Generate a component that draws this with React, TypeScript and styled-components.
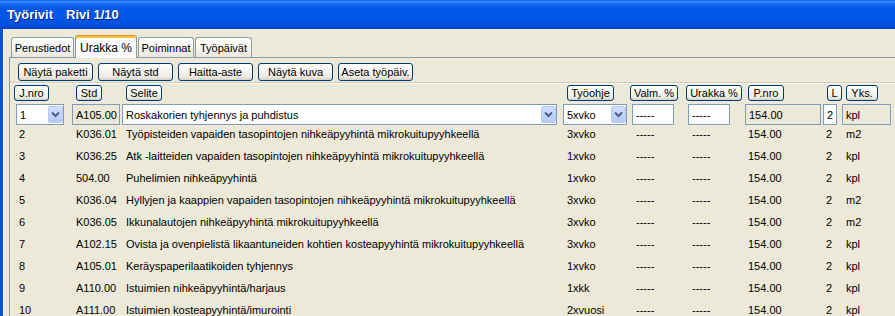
import styled, { createGlobalStyle } from "styled-components";

const GlobalStyle = createGlobalStyle`
  html, body {
    margin: 0;
    padding: 0;
    background: #ece9d8;
  }
  body {
    font-family: "Liberation Sans", Arial, sans-serif;
    font-size: 11px;
    color: #000;
  }
`;

const COLS = "56px 50px 441px 69px 56px 57px 78px 19px 60px";

const Window = styled.div`
  width: 895px;
  height: 316px;
  overflow: hidden;
  display: flex;
  flex-direction: column;
`;

const TitleBar = styled.div`
  height: 29px;
  flex: none;
  display: flex;
  align-items: center;
  gap: 13px;
  padding: 0 0 1px 7px;
  box-sizing: border-box;
  color: #fff;
  font-size: 13px;
  font-weight: bold;
  text-shadow: 1px 1px 0 #0a1e8a;
  background: linear-gradient(
    to bottom,
    #0a5cec 0%,
    #3a8dff 5%,
    #1a6ff5 12%,
    #0058e8 30%,
    #0055e5 70%,
    #0050dd 88%,
    #003fc2 100%
  );
`;

const Body = styled.div`
  flex: 1;
  border-left: 3px solid #0b4fdc;
  box-shadow: inset 1px 0 0 #f7f6f0;
  padding: 6px 0 0 6px;
  display: flex;
  flex-direction: column;
`;

const TabStrip = styled.div`
  display: flex;
  align-items: flex-end;
  height: 22px;
  padding-left: 2px;
  gap: 1px;
  position: relative;
  z-index: 1;
`;

const Tab = styled.div<{ $active?: boolean; $w: number }>`
  width: ${(p) => p.$w}px;
  height: ${(p) => (p.$active ? 23 : 20)}px;
  margin-bottom: ${(p) => (p.$active ? -1 : 0)}px;
  box-sizing: border-box;
  border: 1px solid #919b9c;
  border-bottom: none;
  border-radius: 3px 3px 0 0;
  display: flex;
  align-items: center;
  justify-content: center;
  padding-top: 1px;
  background: ${(p) =>
    p.$active ? "#fcfcfe" : "linear-gradient(to bottom, #fff 0%, #f3f2ec 60%, #e9e7df 100%)"};
  box-shadow: ${(p) => (p.$active ? "inset 0 2px 0 #ffc83c" : "none")};
  border-top-color: ${(p) => (p.$active ? "#e68b2c" : "#919b9c")};
  font-size: ${(p) => (p.$active ? 12 : 11)}px;
`;

const Panel = styled.div`
  flex: 1;
  border-top: 1px solid #919b9c;
  border-left: 1px solid #919b9c;
  padding-top: 5px;
`;

const Toolbar = styled.div`
  display: flex;
  gap: 5px;
  padding-left: 8px;
`;

const XpButton = styled.div<{ $w: number; $h: number }>`
  width: ${(p) => p.$w}px;
  height: ${(p) => p.$h}px;
  box-sizing: border-box;
  border: 1px solid #003c74;
  border-radius: 3px;
  background: linear-gradient(to bottom, #fff 0%, #f6f5f0 45%, #ecebe4 80%, #d6d0c5 100%);
  display: flex;
  align-items: center;
  justify-content: center;
  white-space: nowrap;
  flex: none;
`;

const Separator = styled.div`
  margin-top: 1px;
  height: 0;
  border-top: 1px solid #d0ccbc;
  border-bottom: 1px solid #f8f7f2;
`;

const Grid = styled.div`
  padding-left: 6px;
  margin-top: 1px;
`;

const HeaderRow = styled.div`
  display: grid;
  grid-template-columns: ${COLS};
  height: 16px;
  margin-bottom: 3px;
`;

const HeaderCell = styled.div<{ $shift: number }>`
  margin-left: ${(p) => p.$shift}px;
`;

const EditRow = styled.div`
  display: grid;
  grid-template-columns: ${COLS};
  height: 22px;
`;

const Field = styled.div<{ $w: number; $ro?: boolean }>`
  width: ${(p) => p.$w}px;
  height: 21px;
  box-sizing: border-box;
  border: 1px solid #7f9db9;
  background: ${(p) => (p.$ro ? "#ece9d8" : "#fff")};
  display: flex;
  align-items: center;
  font-size: 11px;
  white-space: nowrap;
  overflow: hidden;
`;

const FieldText = styled.span`
  flex: 1;
  padding-left: 3px;
`;

const DropButton = styled.div`
  width: 15px;
  height: 17px;
  margin: 1px 0;
  box-sizing: border-box;
  border-radius: 2px;
  background: linear-gradient(to bottom, #d2defc 0%, #c1d3fb 50%, #b4c8f6 100%);
  border: 1px solid #b9cbf3;
  display: flex;
  align-items: center;
  justify-content: center;
  flex: none;
`;

const DataRow = styled.div`
  display: grid;
  grid-template-columns: ${COLS};
  line-height: 16px;
  padding-bottom: 6px;
`;

const Cell = styled.div<{ $pad?: number }>`
  padding-left: ${(p) => p.$pad ?? 4}px;
  white-space: nowrap;
`;

const Chevron = () => (
  <svg width="9" height="7" viewBox="0 0 9 7">
    <path d="M1 1.5 L4.5 5 L8 1.5" fill="none" stroke="#4d6185" strokeWidth="2" />
  </svg>
);

const Combo = ({ w, value }: { w: number; value: string }) => (
  <Field $w={w}>
    <FieldText>{value}</FieldText>
    <DropButton>
      <Chevron />
    </DropButton>
  </Field>
);

const headers: { label: string; w: number; shift: number }[] = [
  { label: "J.nro", w: 35, shift: -2 },
  { label: "Std", w: 26, shift: 4 },
  { label: "Selite", w: 36, shift: 4 },
  { label: "Työohje", w: 47, shift: 4 },
  { label: "Valm. %", w: 48, shift: -2 },
  { label: "Urakka %", w: 56, shift: -2 },
  { label: "P.nro", w: 36, shift: 3 },
  { label: "L", w: 15, shift: 4 },
  { label: "Yks.", w: 32, shift: 4 },
];

const rows = [
  ["2", "K036.01", "Työpisteiden vapaiden tasopintojen nihkeäpyyhintä mikrokuitupyyhkeellä", "3xvko", "m2"],
  ["3", "K036.25", "Atk -laitteiden vapaiden tasopintojen nihkeäpyyhintä mikrokuitupyyhkeellä", "1xvko", "kpl"],
  ["4", "504.00", "Puhelimien nihkeäpyyhintä", "1xvko", "kpl"],
  ["5", "K036.04", "Hyllyjen ja kaappien vapaiden tasopintojen nihkeäpyyhintä mikrokuitupyyhkeellä", "3xvko", "m2"],
  ["6", "K036.05", "Ikkunalautojen nihkeäpyyhintä mikrokuitupyyhkeellä", "3xvko", "m2"],
  ["7", "A102.15", "Ovista ja ovenpielistä likaantuneiden kohtien kosteapyyhintä mikrokuitupyyhkeellä", "3xvko", "kpl"],
  ["8", "A105.01", "Keräyspaperilaatikoiden tyhjennys", "1xvko", "kpl"],
  ["9", "A110.00", "Istuimien nihkeäpyyhintä/harjaus", "1xkk", "kpl"],
  ["10", "A111.00", "Istuimien kosteapyyhintä/imurointi", "2xvuosi", "kpl"],
];

const tabs = [
  { label: "Perustiedot", w: 63 },
  { label: "Urakka %", w: 62, active: true },
  { label: "Poiminnat", w: 56 },
  { label: "Työpäivät", w: 57 },
];

const toolButtons = ["Näytä paketti", "Näytä std", "Haitta-aste", "Näytä kuva", "Aseta työpäiv."];

export default function App() {
  return (
    <>
      <GlobalStyle />
      <Window>
        <TitleBar>
          <span>Työrivit</span>
          <span>Rivi 1/10</span>
        </TitleBar>
        <Body>
          <TabStrip>
            {tabs.map((t) => (
              <Tab key={t.label} $w={t.w} $active={t.active}>
                {t.label}
              </Tab>
            ))}
          </TabStrip>
          <Panel>
            <Toolbar>
              {toolButtons.map((b) => (
                <XpButton key={b} $w={75} $h={18}>
                  {b}
                </XpButton>
              ))}
            </Toolbar>
            <Separator />
            <Grid>
              <HeaderRow>
                {headers.map((h) => (
                  <HeaderCell key={h.label} $shift={h.shift}>
                    <XpButton $w={h.w} $h={16}>
                      {h.label}
                    </XpButton>
                  </HeaderCell>
                ))}
              </HeaderRow>
              <EditRow>
                <Combo w={48} value="1" />
                <Field $w={48} $ro>
                  <FieldText>A105.00</FieldText>
                </Field>
                <Combo w={435} value="Roskakorien tyhjennys ja puhdistus" />
                <Combo w={64} value="5xvko" />
                <Field $w={42}>
                  <FieldText>-----</FieldText>
                </Field>
                <Field $w={42}>
                  <FieldText>-----</FieldText>
                </Field>
                <Field $w={76} $ro>
                  <FieldText>154.00</FieldText>
                </Field>
                <Field $w={14}>
                  <FieldText>2</FieldText>
                </Field>
                <Field $w={49} $ro>
                  <FieldText>kpl</FieldText>
                </Field>
              </EditRow>
              {rows.map(([nro, std, selite, ohje, yks]) => (
                <DataRow key={nro}>
                  <Cell $pad={3}>{nro}</Cell>
                  <Cell>{std}</Cell>
                  <Cell>{selite}</Cell>
                  <Cell>{ohje}</Cell>
                  <Cell>-----</Cell>
                  <Cell>-----</Cell>
                  <Cell $pad={3}>154.00</Cell>
                  <Cell $pad={3}>2</Cell>
                  <Cell>{yks}</Cell>
                </DataRow>
              ))}
            </Grid>
          </Panel>
        </Body>
      </Window>
    </>
  );
}
